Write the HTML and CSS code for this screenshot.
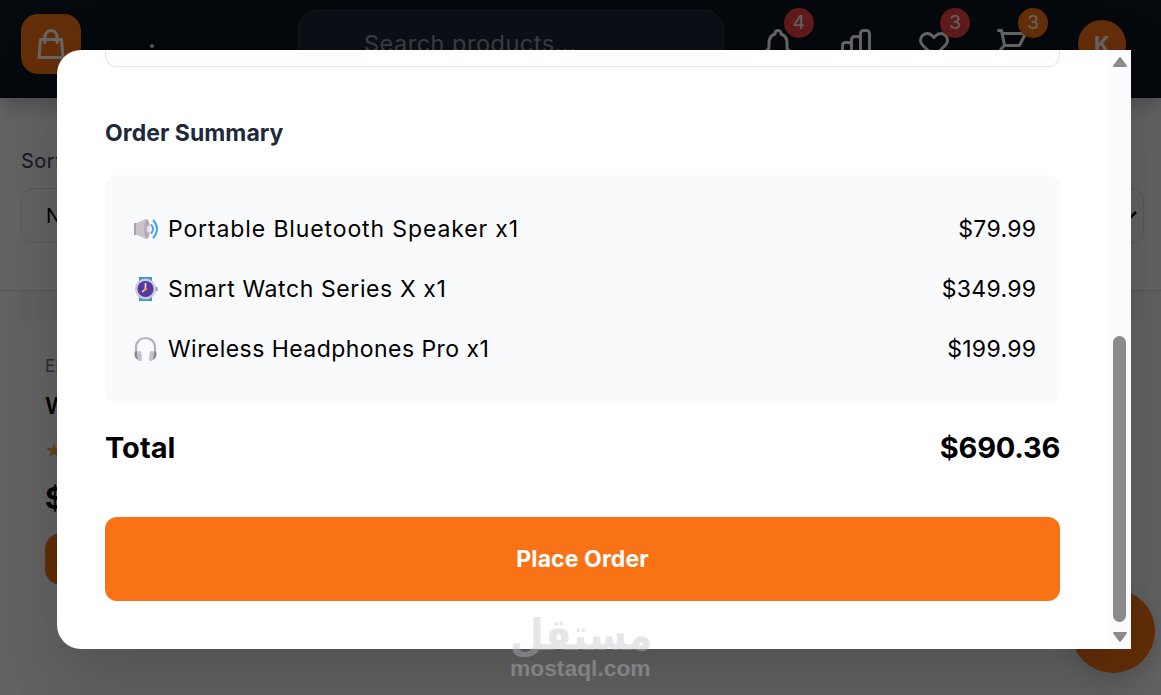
FILE: index.html
```html
<!DOCTYPE html>
<html lang="en">
<head>
    <meta charset="UTF-8">
    <meta name="viewport" content="width=device-width, initial-scale=1.0">
    <title>Checkout</title>
    <link rel="stylesheet" href="styles.css">
</head>
<body>
    <!-- Header -->
    <header class="header">
        <div class="logo">
            <svg class="icon" viewBox="0 0 24 24"><path d="M16 11V7a4 4 0 00-8 0v4M5 9h14l1 12H4L5 9z"/></svg>
        </div>
        <div class="brand-dot"></div>
        <div class="search">Search products...</div>
        <div class="actions">
            <div class="action">
                <svg class="icon" viewBox="0 0 24 24"><path d="M15 17h5l-1.405-1.405A2.032 2.032 0 0118 14.158V11a6.002 6.002 0 00-4-5.659V5a2 2 0 10-4 0v.341C7.67 6.165 6 8.388 6 11v3.159c0 .538-.214 1.055-.595 1.436L4 17h5m6 0v1a3 3 0 11-6 0v-1m6 0H9"/></svg>
                <span class="badge red">4</span>
            </div>
            <div class="action">
                <svg class="icon" viewBox="0 0 24 24"><path d="M9 19v-6a2 2 0 00-2-2H5a2 2 0 00-2 2v6a2 2 0 002 2h2a2 2 0 002-2zm0 0V9a2 2 0 012-2h2a2 2 0 012 2v10m-6 0a2 2 0 002 2h2a2 2 0 002-2m0 0V5a2 2 0 012-2h2a2 2 0 012 2v14a2 2 0 01-2 2h-2a2 2 0 01-2-2z"/></svg>
            </div>
            <div class="action">
                <svg class="icon" viewBox="0 0 24 24"><path d="M4.318 6.318a4.5 4.5 0 000 6.364L12 20.364l7.682-7.682a4.5 4.5 0 00-6.364-6.364L12 7.636l-1.318-1.318a4.5 4.5 0 00-6.364 0z"/></svg>
                <span class="badge red">3</span>
            </div>
            <div class="action">
                <svg class="icon" viewBox="0 0 24 24"><path d="M3 3h2l.4 2M7 13h10l4-8H5.4M7 13L5.4 5M7 13l-2.293 2.293c-.63.63-.184 1.707.707 1.707H17m0 0a2 2 0 100 4 2 2 0 000-4zm-8 2a2 2 0 11-4 0 2 2 0 014 0z"/></svg>
                <span class="badge orange">3</span>
            </div>
        </div>
        <div class="avatar">K</div>
    </header>

    <!-- Sort bar -->
    <section class="sort-bar">
        <div class="sort-label">Sort</div>
        <div class="sort-select">
            <span>N</span>
            <svg class="chevron" viewBox="0 0 18 12"><path d="M2 2l7 7 7-7"/></svg>
        </div>
    </section>

    <!-- Products -->
    <main class="products">
        <div class="card">
            <div class="card-image"></div>
            <div class="card-body">
                <div class="category">EL</div>
                <div class="name">W</div>
                <div class="stars">★</div>
                <div class="price">$</div>
                <div class="add-btn"></div>
            </div>
        </div>
        <div class="card next"></div>
    </main>

    <div class="fab"></div>

    <!-- Checkout modal -->
    <div class="overlay">
        <div class="modal">
            <div class="modal-content">
                <div class="field-end"></div>
                <h2>Order Summary</h2>
                <div class="summary">
                    <div class="row">
                        <svg class="emoji" viewBox="0 0 26 26">
                            <path d="M1 7h5v12H1z" fill="#aaa1ae"/>
                            <path d="M3 7.500l10-4.500q2 1 2 10t-2 10L3 18.500z" fill="#cbc4cf"/>
                            <ellipse cx="14" cy="13" rx="2.800" ry="9.800" fill="#b5a9b8"/>
                            <ellipse cx="15.500" cy="13" rx="1.800" ry="3.500" fill="#e3dee8"/>
                            <path d="M18.500 9q3 4 0 8M20.500 4.500q7 8.500 0 17" fill="none" stroke="#4ba3e8" stroke-width="2" stroke-linecap="round"/>
                        </svg>
                        <span class="item speaker">Portable Bluetooth Speaker x1</span>
                        <span class="cost">$79.99</span>
                    </div>
                    <div class="row">
                        <svg class="emoji" viewBox="0 0 26 26">
                            <path d="M6 1h13v24H6z" fill="#3f93d8"/>
                            <path d="M22 11h2.500v4H22z" fill="#5aa9e6"/>
                            <circle cx="12.500" cy="13" r="10.500" fill="#cbc7dc"/>
                            <circle cx="12.500" cy="13" r="8" fill="#55389d"/>
                            <path d="M12.500 7v6L9 16" fill="none" stroke="#eee" stroke-width="1.500"/>
                            <circle cx="12.500" cy="13" r="1.500" fill="#f59b35"/>
                        </svg>
                        <span class="item watch">Smart Watch Series X x1</span>
                        <span class="cost">$349.99</span>
                    </div>
                    <div class="row">
                        <svg class="emoji" viewBox="0 0 26 26">
                            <path d="M3 17V11a9.500 9 0 0119 0v6" fill="none" stroke="#b9b1bd" stroke-width="2.200"/>
                            <path d="M4 15q-3 0-2.500 4t4 5z" fill="#8f8794"/>
                            <path d="M21 15q3 0 2.500 4t-4 5z" fill="#8f8794"/>
                            <rect x="4.500" y="15" width="4.200" height="10" rx="2" transform="rotate(-6 6 20)" fill="#c6bfcc"/>
                            <rect x="16.300" y="15" width="4.200" height="10" rx="2" transform="rotate(6 19 20)" fill="#c6bfcc"/>
                        </svg>
                        <span class="item headphones">Wireless Headphones Pro x1</span>
                        <span class="cost">$199.99</span>
                    </div>
                </div>
                <div class="total">
                    <span>Total</span>
                    <span class="total-cost">$690.36</span>
                </div>
                <button class="place-btn">Place Order</button>
            </div>
            <div class="scrollbar">
                <svg class="arrow" viewBox="0 0 16 12"><path d="M8 2l6 8H2z"/></svg>
                <div class="thumb"></div>
                <svg class="arrow" viewBox="0 0 16 12"><path d="M8 10L2 2h12z"/></svg>
            </div>
        </div>
    </div>

    <!-- Watermark -->
    <div class="watermark">
        <div class="mark-ar" lang="ar">مستقل</div>
        <div class="mark-en">mostaql.com</div>
    </div>
</body>
</html>
```
FILE: styles.css
```css
* {
    box-sizing: border-box;
}

body {
    margin: 0;
    height: 695px;
    overflow: hidden;
    position: relative;
    font-family: Inter, "Liberation Sans", sans-serif;
    background-color: #fafafa;
    color: #000;
}

/* Header styling */
.header {
    display: flex;
    align-items: center;
    height: 98px;
    padding: 0 35px 10px 21px;
    background-color: #0d141f;
    box-shadow: 0 6px 20px rgba(0, 0, 0, 0.25);
    position: relative;
}

.logo {
    width: 60px;
    height: 60px;
    border-radius: 17px;
    background-color: #f97316;
    color: #fff;
    display: flex;
    align-items: center;
    justify-content: center;
}

.icon {
    width: 36px;
    height: 36px;
    fill: none;
    stroke: currentColor;
    stroke-width: 2;
    stroke-linecap: round;
    stroke-linejoin: round;
}

.brand-dot {
    width: 4px;
    height: 4px;
    margin: 4px 144px 0 69px;
    border-radius: 50%;
    background-color: #ddd;
}

.search {
    width: 426px;
    height: 68px;
    padding-left: 65px;
    border: 1px solid #333a48;
    border-radius: 20px;
    background-color: #1f2735;
    color: #959aa5;
    font-size: 23.5px;
    letter-spacing: 0.5px;
    line-height: 66px;
}

.actions {
    display: flex;
    gap: 42px;
    margin: 0 48px 0 36px;
}

.action {
    position: relative;
    height: 36px;
    color: #fff;
}

.badge {
    position: absolute;
    top: -18px;
    left: 24px;
    width: 30px;
    height: 30px;
    border-radius: 50%;
    color: #fff;
    font-size: 19px;
    line-height: 30px;
    text-align: center;
}

.red {
    background-color: #ef4444;
}

.orange {
    background-color: #f97316;
}

.avatar {
    width: 48px;
    height: 48px;
    border-radius: 50%;
    background-color: #f97316;
    color: #fff;
    font-size: 22px;
    font-weight: 700;
    line-height: 48px;
    text-align: center;
}

/* Sort bar */
.sort-bar {
    height: 193px;
    padding: 49px 17px 0 21px;
    border-bottom: 1px solid #dcdcdc;
}

.sort-label {
    height: 41px;
    color: #334155;
    font-size: 20px;
    line-height: 28px;
    letter-spacing: 0.5px;
}

.sort-select {
    display: flex;
    align-items: center;
    justify-content: space-between;
    height: 55px;
    padding: 0 5px 0 24px;
    border: 1px solid #dedede;
    border-radius: 12px;
    font-size: 20px;
}

.chevron {
    width: 18px;
    height: 12px;
    fill: none;
    stroke: #000;
    stroke-width: 2.5;
}

/* Product cards */
.products {
    height: 404px;
    padding: 0 17px 0 21px;
    overflow: hidden;
    background-color: #f8f8f8;
}

.card {
    height: 355px;
    border: 1px solid #f1f1f1;
    border-top: none;
    border-radius: 0 0 24px 24px;
    background-color: #fafafa;
}

.card.next {
    height: 13px;
    margin-top: 36px;
    border-radius: 24px 24px 0 0;
    background-color: #f4f4f4;
}

.card-image {
    height: 30px;
    background-color: #f3f3f3;
}

.card-body {
    padding: 32px 23px 0;
}

.category {
    height: 33px;
    color: #64748b;
    font-size: 17px;
    line-height: 26px;
}

.name {
    height: 48px;
    font-size: 23px;
    font-weight: 600;
    line-height: 40px;
}

.stars {
    height: 43px;
    color: #fbac38;
    font-family: "DejaVu Sans", sans-serif;
    font-size: 20px;
    line-height: 32px;
}

.price {
    height: 56px;
    font-size: 30px;
    font-weight: 700;
    line-height: 42px;
}

.add-btn {
    height: 52px;
    border-radius: 16px;
    background-color: #f97316;
}

.fab {
    position: absolute;
    left: 1071px;
    top: 589px;
    width: 84px;
    height: 84px;
    border-radius: 50%;
    background-color: #f97316;
    box-shadow: 0 8px 24px rgba(0, 0, 0, 0.15);
}

/* Modal */
.overlay {
    position: absolute;
    inset: 0;
    padding: 50px 30px 46px 57px;
    background-color: rgba(0, 0, 0, 0.6);
}

.modal {
    display: flex;
    height: 599px;
    overflow: hidden;
    border-radius: 24px 0 0 24px;
    background-color: #fff;
    box-shadow: 0 25px 75px rgba(0, 0, 0, 0.2);
}

.modal-content {
    flex: 1;
    padding: 0 48px;
}

.field-end {
    height: 17px;
    border: 1px solid #e5e5e5;
    border-top: none;
    border-radius: 0 0 12px 12px;
}

h2 {
    height: 108px;
    margin: 0;
    padding-top: 48px;
    color: #1e293b;
    font-size: 23px;
    font-weight: 700;
    line-height: 36px;
    letter-spacing: 0.05px;
}

.summary {
    padding: 24px 24px 24px 28px;
    border-radius: 12px;
    background-color: #f9fafc;
}

.row {
    display: flex;
    align-items: center;
    height: 60px;
    font-size: 23px;
}

.emoji {
    width: 26px;
    height: 26px;
    margin-right: 9px;
}

.item {
    flex: 1;
}

.speaker {
    letter-spacing: 0.88px;
}

.watch {
    letter-spacing: 0.6px;
}

.headphones {
    letter-spacing: 0.45px;
}

.cost {
    margin-right: -0.3px;
    letter-spacing: 0.3px;
}

.total {
    display: flex;
    justify-content: space-between;
    height: 114px;
    font-size: 29px;
    font-weight: 700;
    line-height: 90px;
}

.total-cost {
    letter-spacing: -0.25px;
}

.place-btn {
    display: block;
    width: 100%;
    height: 84px;
    border: none;
    border-radius: 12px;
    background-color: #f97316;
    color: #fff;
    font-family: inherit;
    font-size: 23px;
    font-weight: 700;
    letter-spacing: 0.1px;
}

/* Scrollbar */
.scrollbar {
    display: flex;
    flex-direction: column;
    align-items: center;
    width: 23px;
    padding: 6px 0;
    background-color: #fcfcfc;
}

.arrow {
    width: 16px;
    height: 12px;
    fill: #8b8b8b;
    stroke: #8b8b8b;
    stroke-width: 2;
    stroke-linejoin: round;
}

.thumb {
    width: 13px;
    height: 286px;
    margin: 268px 0 9px;
    border-radius: 7px;
    background-color: #8b8b8b;
}

/* Watermark */
.watermark {
    position: absolute;
    left: 510px;
    top: 614px;
    width: 141px;
    color: #c1c1c6;
    opacity: 0.4;
    white-space: nowrap;
}

.mark-ar {
    width: 159px;
    height: 41px;
    font-family: "DejaVu Sans", sans-serif;
    font-size: 44px;
    font-weight: 700;
    line-height: 41px;
    transform: scaleX(0.885);
    transform-origin: left;
}

.mark-en {
    font-family: "Liberation Sans", sans-serif;
    font-size: 22.8px;
    font-weight: 700;
    line-height: 26px;
}
```
